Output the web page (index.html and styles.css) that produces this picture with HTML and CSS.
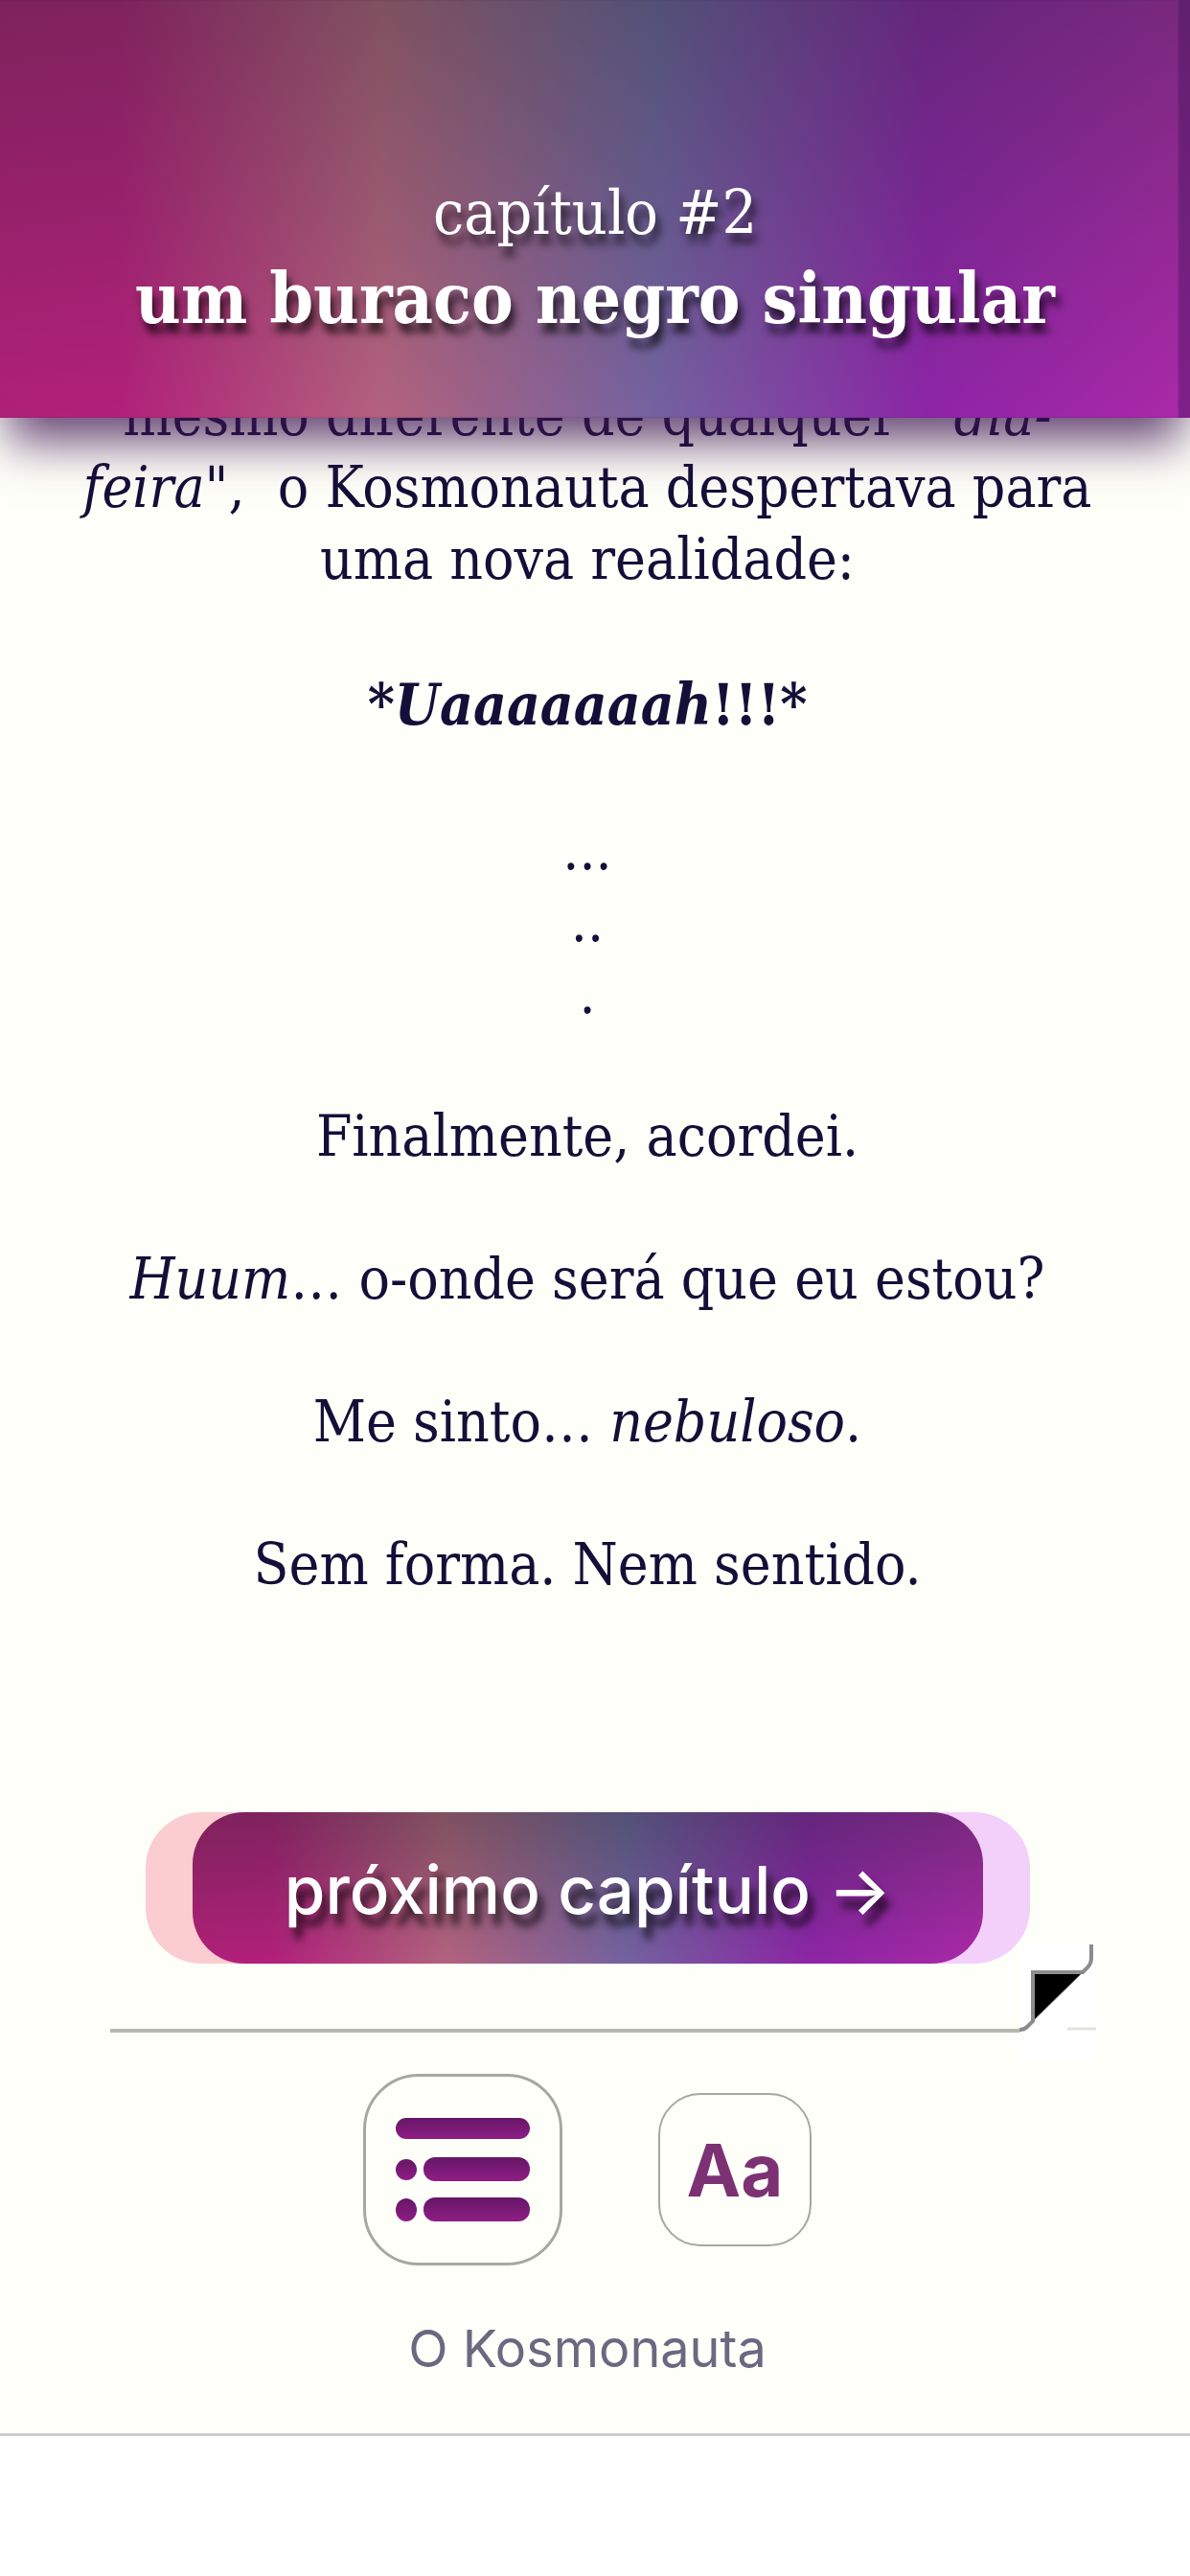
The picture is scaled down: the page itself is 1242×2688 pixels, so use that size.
FILE: index.html
```html
<!DOCTYPE html>
<html lang="pt-BR">
<head>
    <meta charset="UTF-8">
    <meta name="viewport" content="width=device-width, initial-scale=1.0">
    <title>O Kosmonauta</title>
    <link rel="stylesheet" href="styles.css">
</head>
<body>
    <div class="page">
        <header class="chapter-header">
            <p class="chapter-number">capítulo #2</p>
            <h1 class="chapter-title">um buraco negro singular</h1>
        </header>

        <main class="story">
            <p>mesmo diferente de qualquer &nbsp;"<em>dia-<br>feira</em>", &nbsp;o Kosmonauta despertava para<br>uma nova realidade:</p>
            <p class="shout">*<em>Uaaaaaaah</em>!!!*</p>
            <p>...<br>..<br>.</p>
            <p>Finalmente, acordei.</p>
            <p><em>Huum</em>… o-onde será que eu estou?</p>
            <p>Me sinto… <em>nebuloso</em>.</p>
            <p>Sem forma. Nem sentido.</p>
        </main>

        <div class="next">
            <div class="next-frame">
                <a class="next-button" href="#proximo">próximo capítulo →</a>
            </div>
            <!-- dobra da página -->
            <svg class="page-fold" width="80" height="120" viewBox="0 0 80 120" aria-hidden="true">
                <rect width="80" height="120" fill="#fefefe"/>
                <path d="M13 29H66L14 80Z" fill="#000"/>
                <path d="M0 89Q5 89 8 86L14 80V29H66L71 24Q75 20 75 14V0" fill="none" stroke="#8c8c8c" stroke-width="4"/>
                <path d="M14 80L66 29" stroke="#777" stroke-width="1"/>
                <path d="M50 88H80" stroke="#e3e3de" stroke-width="3"/>
            </svg>
        </div>

        <footer class="footer">
            <div class="tools">
                <button class="tool tool-index" aria-label="Índice">
                    <svg width="140" height="108" viewBox="0 0 140 108" aria-hidden="true">
                        <defs>
                            <linearGradient id="bar" x1="0" y1="0" x2="0" y2="1">
                                <stop offset="0" stop-color="#651766"/>
                                <stop offset="1" stop-color="#8f1d86"/>
                            </linearGradient>
                        </defs>
                        <g fill="url(#bar)">
                            <rect x="0" y="0" width="140" height="22" rx="11"/>
                            <circle cx="11" cy="54" r="11"/>
                            <rect x="29" y="41" width="111" height="25" rx="12"/>
                            <ellipse cx="11" cy="96" rx="11" ry="12"/>
                            <rect x="29" y="83" width="111" height="25" rx="12"/>
                        </g>
                    </svg>
                </button>
                <button class="tool tool-font">Aa</button>
            </div>
            <p class="book-name">O Kosmonauta</p>
        </footer>
    </div>
</body>
</html>
```
FILE: styles.css
```css
:root {
    --paper: #fffff9;
    --ink: #140f38;
    --line: #b5b8ae;
    --nebula: linear-gradient(to top, rgba(0, 40, 20, 0), rgba(0, 40, 20, 0.29)),
        linear-gradient(90deg, #b02079 0%, #b2207b 10%, #b3627e 32%, #7462a0 55%, #8d25a6 78%, #ab29a8 100%);
    --serif: "DejaVu Serif Condensed", "DejaVu Serif", serif;
    --sans: Inter, sans-serif;
}

* {
    box-sizing: border-box;
}

body {
    margin: 0;
    background-color: #fff;
    color: var(--ink);
    font-family: var(--serif);
}

p,
h1 {
    margin: 0;
}

.page {
    background-color: var(--paper);
    border-bottom: 3px solid #ccc;
}

.chapter-header {
    position: sticky;
    top: 0;
    z-index: 1;
    padding: 180px 20px 77px;
    background: var(--nebula);
    box-shadow: 0 32px 48px -8px rgba(60, 20, 80, 0.8), inset -12px 0 2px rgba(60, 20, 90, 0.4);
    color: #fff;
    text-align: center;
    text-shadow: 4px 10px 8px rgba(0, 0, 0, 0.7);
}

.chapter-number {
    font-size: 64px;
    line-height: 84px;
}

.chapter-title {
    font-size: 73px;
    line-height: 95px;
}

.story {
    margin-top: -40px;
    padding: 0 16px 0 0;
    font-size: 60px;
    line-height: 75px;
    text-align: center;
}

.story p + p {
    margin-top: 74px;
}

.story .shout {
    font-weight: bold;
    line-height: 80px;
}

.next {
    position: relative;
    margin: 221px 98px 0 115px;
    padding: 0 32px 68px 0;
    display: flex;
    justify-content: center;
    border-bottom: 4px solid var(--line);
}

.next-frame {
    padding: 0 49px;
    border-radius: 58px;
    background: linear-gradient(to right, #fbcdd0 50%, #f3d0fa 50%);
}

.next-button {
    display: block;
    padding: 41px 96px 37px;
    border-radius: 54px;
    background: var(--nebula);
    color: #fff;
    font-family: var(--sans);
    font-size: 69px;
    font-weight: 500;
    line-height: 80px;
    text-decoration: none;
    text-shadow: 6px 12px 8px rgba(0, 0, 0, 0.7);
}

.page-fold {
    position: absolute;
    right: 0;
    bottom: -32px;
}

.footer {
    padding: 43px 16px 53px 0;
    text-align: center;
}

.tools {
    display: flex;
    justify-content: center;
    align-items: center;
    gap: 100px;
}

.tool {
    display: flex;
    justify-content: center;
    align-items: center;
    padding: 0;
    border: 3px solid #a5a8a0;
    background: none;
    cursor: pointer;
}

.tool-index {
    width: 208px;
    height: 200px;
    border-radius: 58px;
}

.tool-font {
    width: 160px;
    height: 160px;
    border-width: 2px;
    border-radius: 44px;
    color: #7c3272;
    font-family: var(--sans);
    font-size: 76px;
    font-weight: bold;
}

.book-name {
    margin-top: 52px;
    color: #6b6880;
    font-family: var(--sans);
    font-size: 54px;
    font-weight: 400;
    line-height: 70px;
}
```
